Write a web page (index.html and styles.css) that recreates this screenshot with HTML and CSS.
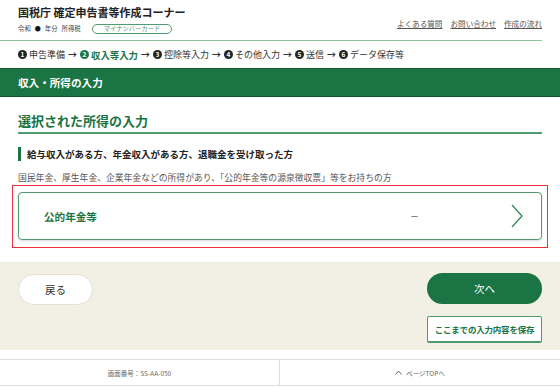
FILE: index.html
```html
<!DOCTYPE html>
<html lang="ja">
<head>
    <meta charset="UTF-8">
    <title>確定申告書等作成コーナー - 収入・所得の入力</title>
    <link rel="stylesheet" href="styles.css">
</head>
<body>
    <header class="site-header">
        <div class="header-top">
            <div class="brand">
                <h1 class="site-title">国税庁 確定申告書等作成コーナー</h1>
                <div class="year-line">
                    <span>令和</span>
                    <span class="dot">●</span>
                    <span>年分</span>
                    <span class="tax">所得税</span>
                    <span class="badge">マイナンバーカード</span>
                </div>
            </div>
            <nav class="header-links">
                <a href="#">よくある質問</a>
                <a href="#">お問い合わせ</a>
                <a href="#">作成の流れ</a>
            </nav>
        </div>
        <ol class="steps">
            <li><span class="num">1</span>申告準備</li>
            <li class="arrow">→</li>
            <li class="current"><span class="num">2</span>収入等入力</li>
            <li class="arrow">→</li>
            <li><span class="num">3</span>控除等入力</li>
            <li class="arrow">→</li>
            <li><span class="num">4</span>その他入力</li>
            <li class="arrow">→</li>
            <li><span class="num">5</span>送信</li>
            <li class="arrow">→</li>
            <li><span class="num">6</span>データ保存等</li>
        </ol>
    </header>

    <div class="page-bar">収入・所得の入力</div>

    <main class="content">
        <h2 class="section-title">選択された所得の入力</h2>
        <h3 class="group-title">給与収入がある方、年金収入がある方、退職金を受け取った方</h3>
        <p class="group-desc">国民年金、厚生年金、企業年金などの所得があり、「公的年金等の源泉徴収票」等をお持ちの方</p>

        <div class="highlight">
            <a class="income-card" href="#">
                <span class="income-name">公的年金等</span>
                <span class="income-value">－</span>
                <svg class="chevron" width="12" height="24" viewBox="0 0 12 24">
                    <path d="M1 1 L11 12 L1 23" fill="none" stroke="#2f8a57" stroke-width="1.3"/>
                </svg>
            </a>
        </div>
    </main>

    <div class="action-area">
        <button class="btn-back">戻る</button>
        <div class="action-right">
            <button class="btn-next">次へ</button>
            <button class="btn-save">ここまでの入力内容を保存</button>
        </div>
    </div>

    <footer class="site-footer">
        <div class="footer-cell">画面番号：SS-AA-050</div>
        <div class="footer-cell">
            <svg class="up" width="7" height="5" viewBox="0 0 7 5">
                <path d="M0.5 4.5 L3.5 1 L6.5 4.5" fill="none" stroke="#555" stroke-width="0.9"/>
            </svg>
            ページTOPへ
        </div>
    </footer>
</body>
</html>
```

FILE: styles.css
```css
:root {
    --green: #1b7444;
    --green-line: #4f9a6e;
    --green-light: #8cc4a2;
    --text: #222222;
    --text-muted: #555555;
    --beige: #f2efe4;
    --red: #e8333c;
}

* {
    margin: 0;
    padding: 0;
    box-sizing: border-box;
}

body {
    font-family: "Noto Sans CJK JP", "Noto Sans", sans-serif;
    color: var(--text);
    background: #ffffff;
    width: 560px;
}

a {
    color: inherit;
}

/* header */
.header-top {
    display: flex;
    justify-content: space-between;
    margin-right: 18px;
    padding: 5px 0 6px 18px;
    border-bottom: 1px solid var(--green-light);
}

.site-title {
    font-size: 11px;
    line-height: 14px;
    font-weight: 700;
    color: var(--text);
}

.year-line {
    display: flex;
    align-items: center;
    height: 11px;
    margin-top: 4px;
    font-size: 6.4px;
    color: #444;
}

.year-line span {
    margin-right: 4px;
}

.year-line .dot {
    font-size: 6px;
    color: #111;
}

.year-line .tax {
    margin-right: 11px;
}

.badge {
    display: inline-flex;
    align-items: center;
    height: 10px;
    padding: 0 11px;
    border: 1px solid var(--green-line);
    border-radius: 5px;
    color: var(--green-line);
    font-size: 6.3px;
}

.header-links {
    display: flex;
    gap: 8px;
    padding-top: 13px;
    font-size: 7.6px;
    line-height: 12px;
}

.header-links a {
    color: var(--text-muted);
}

.steps {
    display: flex;
    align-items: center;
    list-style: none;
    height: 27px;
    padding: 0 18px;
    font-size: 9px;
    color: #333;
}

.steps li {
    display: flex;
    align-items: center;
}

.steps .num {
    display: inline-block;
    width: 9px;
    height: 9px;
    margin-right: 2px;
    border-radius: 50%;
    background: #222;
    color: #fff;
    font-size: 6.5px;
    font-weight: 700;
    line-height: 9px;
    text-align: center;
}

.steps .current {
    color: var(--green);
    font-weight: 700;
    font-size: 9.4px;
}

.steps .current .num {
    background: var(--green);
}

.steps .arrow {
    margin: 0 3px;
    font-weight: 700;
}

.page-bar {
    height: 29px;
    padding: 0 18px;
    background: var(--green);
    border-top: 1px solid #0f5a31;
    border-bottom: 1px solid #0f5a31;
    color: #fff;
    font-size: 10.6px;
    font-weight: 700;
    line-height: 27px;
}

/* main */
.content {
    padding: 0 18px;
}

.section-title {
    margin-top: 15px;
    padding-bottom: 2px;
    border-bottom: 2px solid var(--green-line);
    color: var(--green);
    font-size: 13px;
    line-height: 18px;
    font-weight: 700;
}

.group-title {
    margin-top: 13px;
    padding-left: 6px;
    border-left: 3px solid var(--green);
    font-size: 9.5px;
    line-height: 14px;
    font-weight: 700;
}

.group-desc {
    margin-top: 11px;
    font-size: 8.8px;
    line-height: 12px;
    color: var(--text-muted);
}

.highlight {
    margin: 1px -6px 0;
    padding: 6px 5px 7px;
    border: 1px solid var(--red);
}

.income-card {
    display: flex;
    align-items: center;
    height: 48px;
    padding: 0 18px 0 25px;
    border: 1.5px solid var(--green-line);
    border-radius: 4px;
    box-shadow: 0 1px 2px rgba(0, 0, 0, 0.15);
    text-decoration: none;
}

.income-name {
    flex: 1;
    color: var(--green);
    font-size: 10.6px;
    font-weight: 700;
}

.income-value {
    margin-right: 92px;
    color: #444;
    font-size: 9px;
}

/* actions */
.action-area {
    display: flex;
    justify-content: space-between;
    align-items: flex-start;
    margin-top: 14px;
    padding: 11px 18px 7px;
    background: var(--beige);
}

button {
    font-family: inherit;
    cursor: pointer;
}

.btn-back {
    width: 75px;
    height: 31px;
    margin-top: 1px;
    border: 1px solid #e6e0cf;
    border-radius: 16px;
    background: #fff;
    color: #333;
    font-size: 10.5px;
}

.action-right {
    display: flex;
    flex-direction: column;
    gap: 12px;
}

.btn-next {
    width: 115px;
    height: 31px;
    border: none;
    border-radius: 16px;
    background: var(--green);
    color: #fff;
    font-size: 10.5px;
}

.btn-save {
    width: 115px;
    height: 27px;
    border: 1px solid var(--green-line);
    border-bottom-width: 2px;
    border-radius: 2px;
    background: #fff;
    color: var(--green);
    font-size: 8.5px;
    font-weight: 700;
    letter-spacing: -0.2px;
}

/* footer */
.site-footer {
    display: grid;
    grid-template-columns: 280px 1fr;
    margin-top: 9px;
    border-top: 1px solid #dddddd;
    border-bottom: 1px solid #dddddd;
}

.footer-cell {
    display: flex;
    align-items: center;
    justify-content: center;
    gap: 4px;
    height: 25px;
    font-size: 6.5px;
    color: #666;
}

.footer-cell:first-child {
    border-right: 1px solid #dddddd;
}
```
